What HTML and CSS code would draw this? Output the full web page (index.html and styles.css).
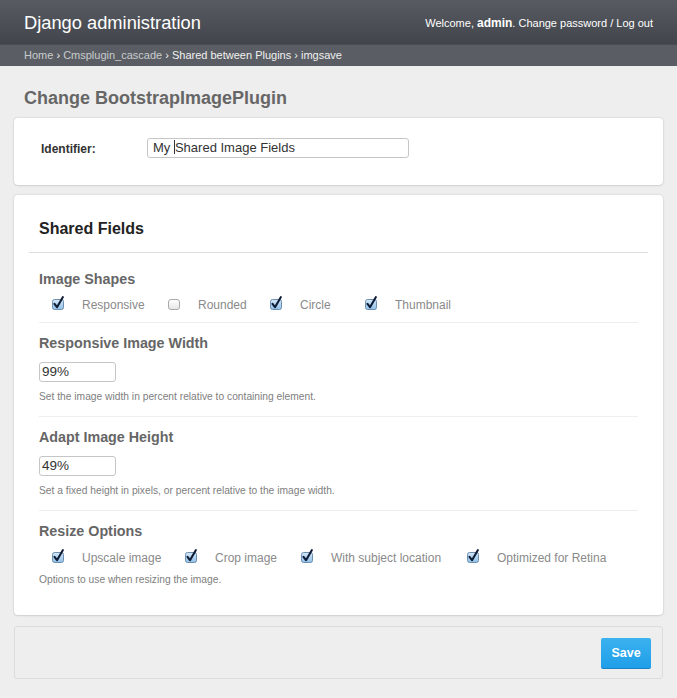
FILE: index.html
```html
<!DOCTYPE html>
<html>
<head>
<meta charset="utf-8">
<link rel="stylesheet" href="styles.css">
</head>
<body>
<svg width="0" height="0" class="defs">
  <defs>
    <linearGradient id="cbon" x1="0" y1="0" x2="0" y2="1">
      <stop offset="0" stop-color="#d6e8f7"/>
      <stop offset="1" stop-color="#8ebfe8"/>
    </linearGradient>
    <linearGradient id="cboff" x1="0" y1="0" x2="0" y2="1">
      <stop offset="0" stop-color="#ffffff"/>
      <stop offset="1" stop-color="#e6e6e6"/>
    </linearGradient>
    <symbol id="chk" viewBox="0 0 14 14">
      <rect x="1.5" y="3.5" width="11" height="10" rx="2" fill="url(#cbon)" stroke="#6f8fae"/>
      <path d="M3.5 7.8 L6 11.2 L11.8 1.2" fill="none" stroke="#0f1e36" stroke-width="2.1" stroke-linecap="round" stroke-linejoin="round"/>
    </symbol>
    <symbol id="unchk" viewBox="0 0 14 14">
      <rect x="1.5" y="3.5" width="11" height="10" rx="2.5" fill="url(#cboff)" stroke="#a9a9a9"/>
    </symbol>
  </defs>
</svg>
<header class="top">
  <div class="branding">Django administration</div>
  <div class="user-tools">Welcome, <strong>admin</strong>. Change password / Log out</div>
</header>
<nav class="crumbs">
  <span class="dim">Home</span> › <span class="dim">Cmsplugin_cascade</span> › Shared between Plugins › imgsave
</nav>
<main class="content">
  <h1 class="title">Change BootstrapImagePlugin</h1>
  <section class="card card-id">
    <label class="id-label">Identifier:</label>
    <div class="input wide">My <span class="caret"></span>Shared Image Fields</div>
  </section>
  <section class="card card-fields">
    <h2 class="fs-title">Shared Fields</h2>
    <div class="rows">
      <div class="row first">
        <h3 class="row-title">Image Shapes</h3>
        <div class="checks">
          <span class="check c1"><svg class="cb"><use href="#chk"/></svg>Responsive</span>
          <span class="check c2"><svg class="cb"><use href="#unchk"/></svg>Rounded</span>
          <span class="check c3"><svg class="cb"><use href="#chk"/></svg>Circle</span>
          <span class="check c4"><svg class="cb"><use href="#chk"/></svg>Thumbnail</span>
        </div>
      </div>
      <div class="row">
        <h3 class="row-title">Responsive Image Width</h3>
        <div class="input small">99%</div>
        <p class="help">Set the image width in percent relative to containing element.</p>
      </div>
      <div class="row">
        <h3 class="row-title">Adapt Image Height</h3>
        <div class="input small">49%</div>
        <p class="help">Set a fixed height in pixels, or percent relative to the image width.</p>
      </div>
      <div class="row last">
        <h3 class="row-title">Resize Options</h3>
        <div class="checks">
          <span class="check r1"><svg class="cb"><use href="#chk"/></svg>Upscale image</span>
          <span class="check r2"><svg class="cb"><use href="#chk"/></svg>Crop image</span>
          <span class="check r3"><svg class="cb"><use href="#chk"/></svg>With subject location</span>
          <span class="check r4"><svg class="cb"><use href="#chk"/></svg>Optimized for Retina</span>
        </div>
        <p class="help tight">Options to use when resizing the image.</p>
      </div>
    </div>
  </section>
  <div class="submit-row">
    <button class="save">Save</button>
  </div>
</main>
</body>
</html>
```
FILE: styles.css
```css
* { box-sizing: border-box; }
html, body { margin: 0; padding: 0; }
body {
  width: 677px;
  height: 698px;
  overflow: hidden;
  background: #eeeeee;
  font-family: "Liberation Sans", Arial, sans-serif;
  color: #333;
}
.defs { position: absolute; width: 0; height: 0; }

.top {
  height: 44px;
  background: linear-gradient(#585c62, #42464c);
  display: flex;
  align-items: center;
  justify-content: space-between;
  padding: 1px 24px 0 24px;
  color: #fff;
}
.branding { font-size: 18.3px; }
.user-tools { font-size: 11px; padding-top: 1px; }
.user-tools strong { font-size: 12px; }

.crumbs {
  height: 22px;
  background: #5a5e64;
  border-top: 1px solid #4a4d52;
  color: #f0f0f0;
  font-size: 11px;
  padding: 4px 0 0 24px;
}
.crumbs .dim { color: #c9cbcd; }

.content { padding: 0 14px; }
.title {
  margin: 0;
  padding: 22px 0 0 10px;
  height: 52px;
  font-size: 18px;
  font-weight: bold;
  color: #666;
}

.card {
  background: #fff;
  border-radius: 4px;
  box-shadow: 0 0 2px rgba(0,0,0,0.18), 0 1px 2px rgba(0,0,0,0.08);
}
.card-id {
  height: 67px;
  display: flex;
  align-items: flex-start;
  padding: 20px 0 0 27px;
}
.id-label {
  width: 106px;
  font-size: 12px;
  font-weight: bold;
  color: #333;
  padding-top: 4px;
}
.input {
  border: 1px solid #c6c6c6;
  border-radius: 3px;
  height: 20px;
  font-size: 13px;
  line-height: 18px;
  color: #333;
  padding: 0 0 0 5px;
  background: #fff;
}
.input.wide { width: 262px; }
.input.small { width: 77px; padding-left: 2px; font-size: 13.5px; }
.caret { display: inline-block; width: 1px; height: 14px; background: #333; vertical-align: -2px; }

.card-fields {
  margin-top: 10px;
  height: 420px;
  padding: 0 15px;
}
.fs-title {
  margin: 0;
  padding: 25px 0 0 10px;
  height: 58px;
  font-size: 16px;
  font-weight: bold;
  color: #222;
  border-bottom: 1px solid #ddd;
}
.rows { padding: 0 10px; }
.row {
  border-bottom: 1px solid #eee;
  padding-top: 11px;
  height: 94px;
}
.row.first { height: 70px; padding-top: 17px; }
.row.last { border-bottom: none; }
.row-title {
  margin: 0 0 9px 0;
  font-size: 14.3px;
  line-height: 19px;
  font-weight: bold;
  color: #666;
}
.row.first .row-title { margin-bottom: 6px; }
.row.last .row-title { margin-bottom: 7px; }
.checks {
  display: flex;
  height: 20px;
  align-items: center;
  font-size: 12px;
  color: #8a8a8a;
}
.check { display: flex; align-items: center; }
.cb { width: 14px; height: 14px; margin-left: 12px; margin-right: 17px; margin-top: -4px; }
.c1 { width: 116px; }
.c2 { width: 102px; }
.c3 { width: 95px; }
.r1 { width: 133px; }
.r2 { width: 116px; }
.r3 { width: 166px; }

.help {
  margin: 9px 0 0 0;
  font-size: 10.25px;
  line-height: 12px;
  color: #808080;
}
.help.tight { margin-top: 6px; }

.submit-row {
  margin-top: 11px;
  height: 53px;
  border: 1px solid #dcdcdc;
  border-radius: 3px;
  background: #eeeeee;
  display: flex;
  justify-content: flex-end;
  align-items: flex-start;
  padding: 11px 11px 0 0;
}
.save {
  width: 50px;
  height: 31px;
  border: none;
  border-bottom: 1px solid #1a82c4;
  border-radius: 2px;
  background: linear-gradient(#3bb2f0, #1f9ee8);
  color: #fff;
  font-family: "Liberation Sans", Arial, sans-serif;
  font-weight: bold;
  font-size: 12.5px;
  padding: 0;
}
```
